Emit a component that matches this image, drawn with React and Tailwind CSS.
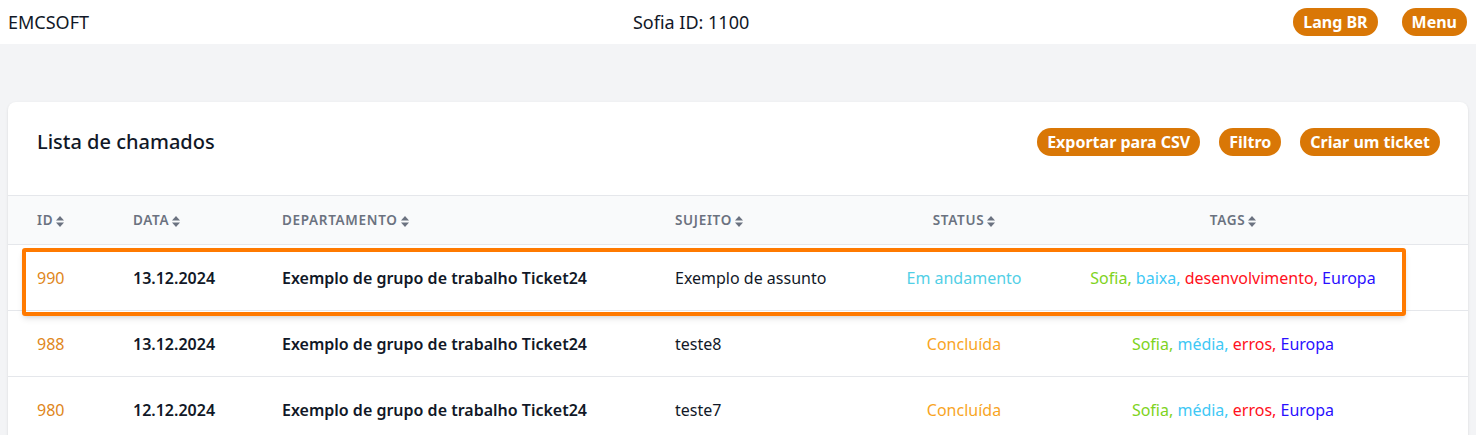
import React from 'react';

const font = { fontFamily: '"Noto Sans", "Open Sans", sans-serif' };

const rows = [
  {
    id: '990',
    date: '13.12.2024',
    dept: 'Exemplo de grupo de trabalho Ticket24',
    subject: 'Exemplo de assunto',
    status: 'Em andamento',
    statusClass: 'text-[#52cfe6]',
    tags: ['Sofia', 'baixa', 'desenvolvimento', 'Europa'],
    highlight: true,
  },
  {
    id: '988',
    date: '13.12.2024',
    dept: 'Exemplo de grupo de trabalho Ticket24',
    subject: 'teste8',
    status: 'Concluída',
    statusClass: 'text-[#f8a51f]',
    tags: ['Sofia', 'média', 'erros', 'Europa'],
  },
  {
    id: '980',
    date: '12.12.2024',
    dept: 'Exemplo de grupo de trabalho Ticket24',
    subject: 'teste7',
    status: 'Concluída',
    statusClass: 'text-[#f8a51f]',
    tags: ['Sofia', 'média', 'erros', 'Europa'],
  },
];

const tagColors = ['text-[#7ed321]', 'text-[#3ec8f5]', 'text-[#ff1020]', 'text-[#2a10ff]'];

function SortIcon() {
  return (
    <svg width="8" height="11" viewBox="0 0 8 11" className="ml-[3px] inline-block">
      <path d="M4 0 L8 4.5 L0 4.5 Z" fill="#6b7280" />
      <path d="M4 11 L8 6.5 L0 6.5 Z" fill="#6b7280" />
    </svg>
  );
}

function Pill({ children }) {
  return (
    <button className="bg-[#d97706] text-white font-bold text-[16px] leading-none rounded-full px-[10px] h-[28px]">
      {children}
    </button>
  );
}

const cols = 'grid grid-cols-[125px_149px_393px_205px_168px_370px_1fr] items-center';

function App() {
  return (
    <div className="min-h-screen bg-[#f3f4f6] text-[#111827]" style={font}>
      <div className="bg-white h-[44px] flex items-center justify-between pl-2 pr-[9px]">
        <span className="text-[18px]">EMCSOFT</span>
        <span className="text-[18px]">Sofia ID: 1100</span>
        <div className="flex gap-[24px]">
          <Pill>Lang BR</Pill>
          <Pill>Menu</Pill>
        </div>
      </div>

      <div className="pt-[58px] px-2">
        <div className="bg-white rounded-t-lg shadow-sm relative">
          <div className="flex items-center justify-between pl-[29px] pr-[28px] h-[93px] pb-[13px]">
            <h1 className="text-[20px] font-medium">Lista de chamados</h1>
            <div className="flex gap-[19px]">
              <Pill>Exportar para CSV</Pill>
              <Pill>Filtro</Pill>
              <Pill>Criar um ticket</Pill>
            </div>
          </div>

          <div className={`${cols} h-[50px] bg-[#f9fafb] border-y border-[#e5e7eb] text-[13.5px] font-semibold uppercase tracking-wider text-[#6b7280]`}>
            <div className="pl-[29px]">ID<SortIcon /></div>
            <div>Data<SortIcon /></div>
            <div>Departamento<SortIcon /></div>
            <div>Sujeito<SortIcon /></div>
            <div className="text-center">Status<SortIcon /></div>
            <div className="text-center">Tags<SortIcon /></div>
            <div />
          </div>

          {rows.map((r) => (
            <div key={r.id} className={`${cols} h-[66px] border-b border-[#e5e7eb] text-[16px] relative`}>
              <div className="pl-[29px] text-[#e0861a]">{r.id}</div>
              <div className="font-semibold">{r.date}</div>
              <div className="font-semibold">{r.dept}</div>
              <div>{r.subject}</div>
              <div className={`text-center ${r.statusClass}`}>{r.status}</div>
              <div className="text-center">
                {r.tags.map((t, i) => (
                  <span key={t} className={tagColors[i]}>
                    {t}
                    {i < r.tags.length - 1 ? ', ' : ''}
                  </span>
                ))}
              </div>
              <div />
              {r.highlight && (
                <div className="absolute left-[14px] top-[3px] w-[1384px] h-[68px] border-[4px] border-[#ff7a00] rounded-[3px] shadow-md pointer-events-none" />
              )}
            </div>
          ))}
        </div>
      </div>
    </div>
  );
}

export default App;
